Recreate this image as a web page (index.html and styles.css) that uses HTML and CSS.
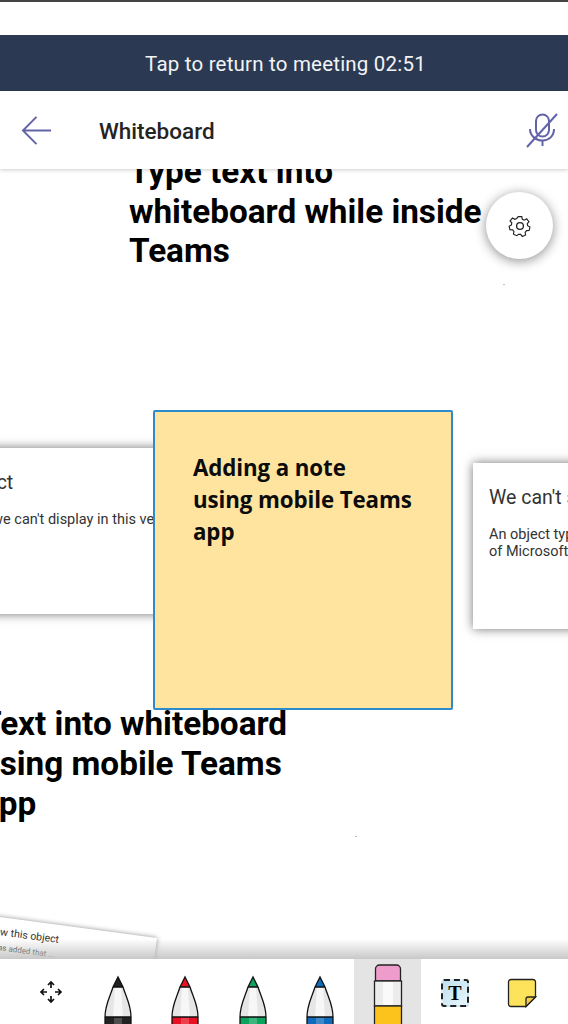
FILE: index.html
```html
<!doctype html>
<html>
<head>
  <meta charset="utf-8">
  <meta name="viewport" content="width=device-width, initial-scale=1">
  <title>Whiteboard</title>
  <link rel="stylesheet" href="styles.css">
</head>
<body>

  <svg class="defs" width="0" height="0">
    <symbol id="pen" viewBox="0 0 40 65">
      <path class="pen-body" d="M7 65V58C7 46 12 38 15 28H25C28 38 33 46 33 58V65Z"/>
      <path class="pen-shine" d="M17 29H23L25 58H15Z"/>
      <path class="pen-ink" d="M15 28L20 18L25 28Z"/>
      <rect class="pen-ink" x="7" y="58" width="26" height="7"/>
      <rect class="pen-glow" x="16" y="59" width="8" height="6"/>
      <path class="pen-line" d="M7 65V58C7 46 12 38 15 28L20 18L25 28C28 38 33 46 33 58V65M15 28H25M7 58H33"/>
    </symbol>
  </svg>

  <div class="top-strip"></div>

  <div class="banner">Tap to return to meeting 02:51</div>

  <header class="app-bar">
    <svg class="back-icon" width="32" height="32" viewBox="0 0 32 32">
      <path d="M31 16H2M16 2L2 16L16 30"/>
    </svg>
    <h1 class="app-title">Whiteboard</h1>
    <svg class="mic-icon" width="32" height="36" viewBox="0 0 32 36">
      <path d="M10 18V9a6.500 6.500 0 0 1 13 0V18a6.500 6.500 0 0 1-13 0Z"/>
      <path d="M4 17c0 7 6 11.500 12.500 11.500S28 24 28 17M16.500 28.500V34M1 35L31 2"/>
    </svg>
  </header>

  <main class="canvas">
    <h2 class="board-text board-text-top">Type text into<br>whiteboard while inside<br>Teams</h2>
    <h2 class="board-text board-text-bottom">Text into whiteboard<br>using mobile Teams<br>app</h2>

    <div class="card card-left">
      <div class="card-title">We can't show this object</div>
      <p class="card-body">An object type was added that we can't display in this version<br>of Microsoft Whiteboard.</p>
    </div>
    <div class="card card-right">
      <div class="card-title">We can't show this object</div>
      <p class="card-body">An object type was added that we can't display in this version<br>of Microsoft Whiteboard.</p>
    </div>
    <div class="card card-tilted">
      <div class="card-title">We can't show this object</div>
      <p class="card-body">An object type was added that ...</p>
    </div>

    <div class="note">Adding a note<br>using mobile Teams<br>app</div>

    <span class="speck speck-a"></span>
    <span class="speck speck-b"></span>

    <button class="settings" type="button">
      <svg width="24" height="24" viewBox="0 0 24 24">
        <circle cx="12" cy="12" r="3.400"/>
        <path d="M10 1.500h4l.6 3 2.200 1 2.700-1.500 2.600 3.200-1.900 2.300.4 2.300 2.600 1.500-.9 3.900-3 .1-1.500 1.900.5 3-3.700 1.700-1.900-2.400h-2.400L8.300 23l-3.700-1.700.5-3-1.500-1.900-3-.1L-.3 12.400l2.600-1.500.4-2.300L.8 6.300l2.600-3.200L6.100 4.600l2.200-1Z" transform="translate(1.400 1.300) scale(.885)"/>
      </svg>
    </button>

    <div class="canvas-fade"></div>
  </main>

  <nav class="toolbar">
    <div class="tool">
      <svg class="move-icon" width="24" height="24" viewBox="0 0 24 24">
        <path d="M12 2V8M9 5L12 2L15 5M12 22V16M9 19L12 22L15 19M2 12H8M5 9L2 12L5 15M22 12H16M19 9L22 12L19 15"/>
      </svg>
    </div>
    <div class="tool tool-pen ink-black"><svg width="40" height="65"><use href="#pen"/></svg></div>
    <div class="tool tool-pen ink-red"><svg width="40" height="65"><use href="#pen"/></svg></div>
    <div class="tool tool-pen ink-green"><svg width="40" height="65"><use href="#pen"/></svg></div>
    <div class="tool tool-pen ink-blue"><svg width="40" height="65"><use href="#pen"/></svg></div>
    <div class="tool tool-pen tool-selected">
      <svg width="40" height="65" viewBox="0 0 40 65">
        <path class="pencil-rubber" d="M7.500 22V10a4 4 0 0 1 4-4h17a4 4 0 0 1 4 4V22Z"/>
        <rect class="pencil-band" x="6.500" y="22" width="27" height="25"/>
        <rect class="pencil-shine" x="15" y="23" width="10" height="23"/>
        <rect class="pencil-lead" x="6.500" y="47" width="27" height="20"/>
      </svg>
    </div>
    <div class="tool">
      <span class="text-icon">T</span>
    </div>
    <div class="tool">
      <svg class="note-icon" width="30" height="30" viewBox="0 0 30 30">
        <path class="note-sheet" d="M4 1.500H26a2.500 2.500 0 0 1 2.500 2.500V19L19 28.500H4A2.500 2.500 0 0 1 1.500 26V4A2.500 2.500 0 0 1 4 1.500Z"/>
        <path class="note-fold" d="M28.500 19H21a2 2 0 0 0-2 2V28.500Z"/>
      </svg>
    </div>
  </nav>

</body>
</html>
```

FILE: styles.css
```css
* {
  box-sizing: border-box;
}
html, body {
  margin: 0;
  height: 100%;
}
body {
  width: 568px;
  height: 1024px;
  display: flex;
  flex-direction: column;
  overflow: hidden;
  background: #fff;
  font-family: Roboto, sans-serif;
}
.defs {
  position: absolute;
}
.top-strip {
  height: 35px;
  flex: none;
  border-top: 2px solid #444;
  background: #fff;
}
.banner {
  height: 56px;
  flex: none;
  display: flex;
  align-items: center;
  justify-content: center;
  padding: 2px 0 0 3px;
  background: #2b3a52;
  color: #f2f4f7;
  font-size: 20.500px;
  letter-spacing: 0.2px;
}
.app-bar {
  height: 78px;
  flex: none;
  display: flex;
  align-items: center;
  padding: 0 10px 0 21px;
  background: #fff;
  box-shadow: 0 1px 4px rgba(0,0,0,0.2);
  position: relative;
  z-index: 2;
}
.back-icon {
  width: 31px;
  height: 31px;
  flex: none;
}
.back-icon path, .mic-icon path {
  fill: none;
  stroke: #6264a7;
  stroke-width: 2;
}
.app-title {
  margin: 2px 0 0 47px;
  flex: 1;
  font-size: 22.500px;
  font-weight: 500;
  color: #252423;
}
.mic-icon {
  flex: none;
}
.canvas {
  flex: 1;
  position: relative;
  overflow: hidden;
  background: #fff;
}
.board-text {
  position: absolute;
  margin: 0;
  font-size: 33.300px;
  line-height: 40px;
  font-weight: 700;
  color: #000;
  white-space: nowrap;
}
.board-text-top {
  left: 129px;
  top: -17px;
  line-height: 39.500px;
}
.board-text-bottom {
  left: -19px;
  top: 535px;
}
.card {
  position: absolute;
  width: 300px;
  height: 166px;
  padding: 24px 16px;
  background: #fff;
  box-shadow: 0 0 10px rgba(0,0,0,0.55);
  color: #333;
  white-space: nowrap;
}
.card-title {
  font-size: 19.500px;
  line-height: 22px;
}
.card-body {
  margin: 17px 0 0;
  font-size: 14.500px;
  line-height: 17px;
}
.card-left {
  left: -222px;
  top: 279px;
  width: 420px;
}
.card-right {
  left: 473px;
  top: 294px;
}
.card-tilted {
  left: -63px;
  top: 769px;
  width: 220px;
  padding: 9px 5px;
  transform-origin: top right;
  transform: rotate(7.600deg);
  box-shadow: 0 0 5px rgba(0,0,0,0.45);
}
.card-tilted .card-title {
  font-size: 10.500px;
  line-height: 12px;
}
.card-tilted .card-body {
  margin-top: 5px;
  font-size: 8px;
  line-height: 10px;
}
.note {
  position: absolute;
  left: 153px;
  top: 241px;
  width: 300px;
  height: 300px;
  padding: 40px 38px;
  background: #fee49f;
  border: 2px solid #2e8bcb;
  border-radius: 2px;
  font-family: "Open Sans", sans-serif;
  font-size: 22.300px;
  font-weight: 700;
  letter-spacing: -0.1px;
  line-height: 32px;
  color: #0c0c0c;
  white-space: nowrap;
}
.speck {
  position: absolute;
  width: 2px;
  height: 1px;
  background: #bbb;
}
.speck-a {
  left: 503px;
  top: 115px;
}
.speck-b {
  left: 355px;
  top: 667px;
}
.settings {
  position: absolute;
  left: 486px;
  top: 23px;
  width: 67px;
  height: 67px;
  padding: 0;
  display: flex;
  align-items: center;
  justify-content: center;
  border: none;
  border-radius: 50%;
  background: #fff;
  box-shadow: 0 2px 12px rgba(0,0,0,0.45);
}
.settings svg {
  fill: none;
  stroke: #222;
  stroke-width: 1.300;
}
.canvas-fade {
  position: absolute;
  left: 0;
  right: 0;
  bottom: 0;
  height: 20px;
  background: linear-gradient(rgba(190,190,190,0), rgba(190,190,190,0.85));
}
.toolbar {
  height: 65px;
  flex: none;
  display: flex;
  padding-left: 17px;
  background: #fff;
  position: relative;
}
.tool {
  width: 67.400px;
  flex: none;
  display: flex;
  align-items: center;
  justify-content: center;
  overflow: hidden;
}
.tool-pen {
  align-items: flex-start;
}
.tool-selected {
  background: #e4e4e4;
}
.ink-black { --ink: #222; }
.ink-red { --ink: #e81123; }
.ink-green { --ink: #0ca35f; }
.ink-blue { --ink: #0f6cbd; }
.pen-body {
  fill: #e6e6e6;
}
.pen-shine {
  fill: #f7f7f7;
}
.pen-ink {
  fill: var(--ink);
}
.pen-glow {
  fill: #fff;
  opacity: 0.2;
}
.pen-line {
  fill: none;
  stroke: #111;
  stroke-width: 1.300;
}
.pencil-rubber {
  fill: #ee9ccb;
  stroke: #222;
  stroke-width: 1.300;
}
.pencil-band {
  fill: #ececec;
  stroke: #222;
  stroke-width: 1.300;
}
.pencil-shine {
  fill: #fafafa;
}
.pencil-lead {
  fill: #fdc31d;
  stroke: #222;
  stroke-width: 1.300;
}
.move-icon path {
  fill: none;
  stroke: #111;
  stroke-width: 1.700;
}
.move-icon {
  margin-top: 1px;
}
.text-icon {
  width: 28px;
  height: 28px;
  display: flex;
  align-items: center;
  justify-content: center;
  margin-top: 3px;
  border: 2px dashed #222;
  border-radius: 3px;
  background: linear-gradient(135deg, #bfe0f0, #e8f5fb);
  font-family: "Liberation Serif", serif;
  font-size: 20px;
  font-weight: 700;
  color: #000;
}
.note-icon {
  margin-top: 3px;
}
.note-sheet {
  fill: #fde35b;
  stroke: #222;
  stroke-width: 1.300;
}
.note-fold {
  fill: #f4cf4a;
  stroke: #222;
  stroke-width: 1.300;
}
```
